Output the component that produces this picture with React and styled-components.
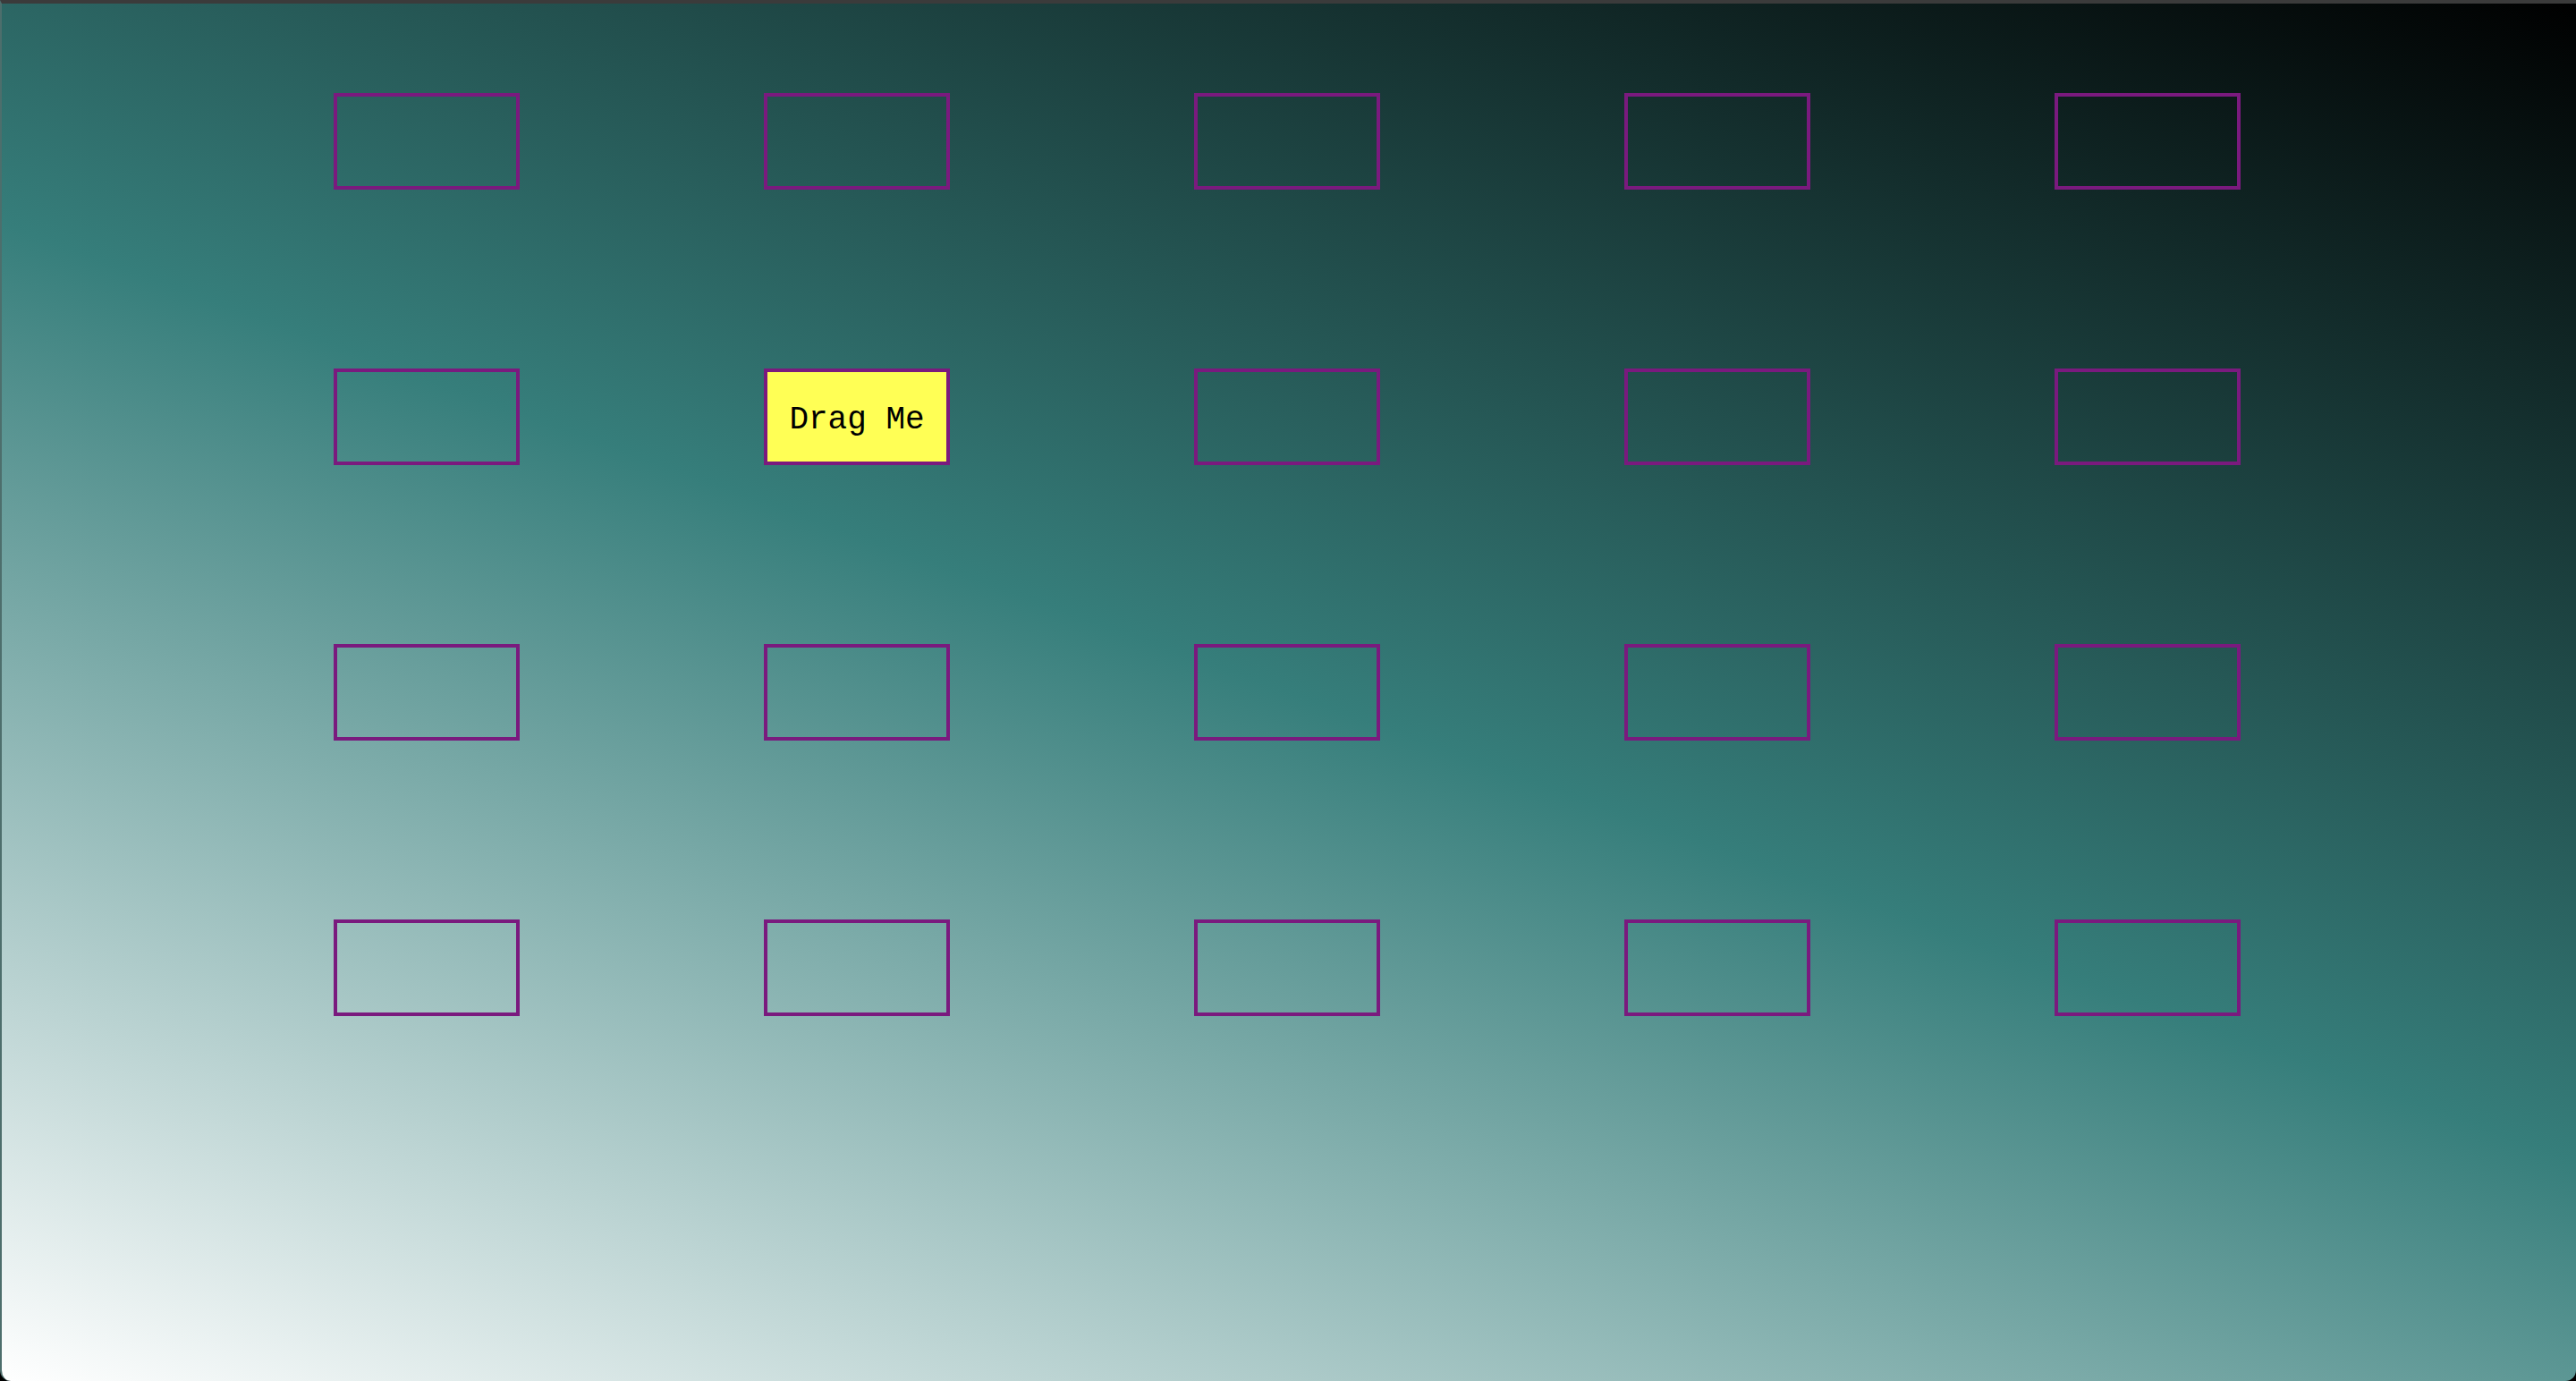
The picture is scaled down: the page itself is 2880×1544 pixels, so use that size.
import React from 'react'
import styled, { createGlobalStyle } from 'styled-components'

const GlobalStyle = createGlobalStyle`
  html, body {
    margin: 0;
    padding: 0;
    background: #000;
  }
  body {
    font-family: "Liberation Mono", "Courier New", monospace;
  }
`

const Window = styled.div`
  box-sizing: border-box;
  width: 2880px;
  height: 1544px;
  border-top: 4px solid #3b3b3b;
  border-left: 2px solid #4d6e6c;
  border-radius: 0 0 12px 12px;
  overflow: hidden;
  background: linear-gradient(20deg, #ffffff 0%, #367e7b 50%, #000000 100%);
`

const Board = styled.div`
  display: grid;
  grid-template-columns: repeat(5, 208px);
  grid-auto-rows: 108px;
  column-gap: 273px;
  row-gap: 200px;
  justify-content: center;
  padding: 100px 4px 0 0;
`

const Slot = styled.div`
  box-sizing: border-box;
  width: 208px;
  height: 108px;
  border: 4px solid #7a1a7e;
  display: flex;
  align-items: center;
  justify-content: center;
  background: ${(p) => (p.$filled ? '#ffff55' : 'transparent')};
`

const Label = styled.span`
  font-family: "Liberation Mono", "Courier New", monospace;
  font-size: 36px;
  color: #000;
  padding-top: 6px;
  user-select: none;
  cursor: grab;
`

const slots = Array.from({ length: 20 }, (_, i) => i)
const filledIndex = 6

export default function App() {
  return (
    <>
      <GlobalStyle />
      <Window>
        <Board>
          {slots.map((i) => (
            <Slot key={i} $filled={i === filledIndex}>
              {i === filledIndex && <Label draggable>Drag Me</Label>}
            </Slot>
          ))}
        </Board>
      </Window>
    </>
  )
}
